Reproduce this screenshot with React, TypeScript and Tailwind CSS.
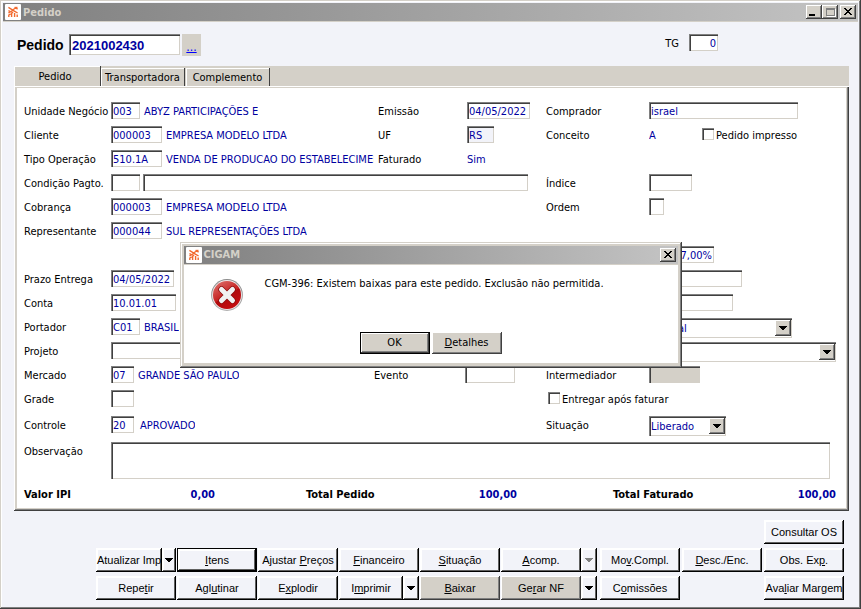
import type { ReactNode } from "react";

const sunken =
  "shadow-[inset_1px_1px_#808080,inset_2px_2px_#404040,inset_-1px_-1px_#d4d0c8]";
const raised =
  "shadow-[inset_-1px_-1px_#404040,inset_1px_1px_#ffffff,inset_-2px_-2px_#808080]";
const frame =
  "shadow-[inset_-1px_-1px_#404040,inset_1px_1px_#d4d0c8,inset_-2px_-2px_#808080,inset_2px_2px_#ffffff]";

function AppIcon() {
  return (
    <svg viewBox="0 0 16 16" className="size-4 shrink-0" aria-hidden="true">
      <rect width="16" height="16" rx="1" fill="#fff" />
      <g fill="none" stroke="#f26a2e" strokeWidth="1.4">
        <path d="M3.4 3.4 L7.4 5.8 M3.4 6.6 L5 7.4 M7.4 6 L12.4 3 M9.6 3.2 L12.6 5.2 M3.4 9 L8 6.4 L12.6 9" />
        <path d="M3.8 13 L3.8 11 L5.6 9.8 M6.6 13 L6.6 9 L8.2 8.4 M9.6 13 L9.6 9 M12.2 13 L12.2 10.4" />
      </g>
    </svg>
  );
}

function TitleButton({ label, children }: { label: string; children: ReactNode }) {
  return (
    <button
      type="button"
      aria-label={label}
      className={`flex h-3.5 w-4 items-center justify-center bg-[#d4d0c8] ${raised}`}
    >
      {children}
    </button>
  );
}

function CloseGlyph() {
  return (
    <svg viewBox="0 0 16 14" className="h-3.5 w-4" shapeRendering="crispEdges" aria-hidden="true">
      <path
        d="M4 3h2v1h1v1h2v-1h1v-1h2v1h-1v1h-1v1h-1v1h1v1h1v1h1v1h-2v-1h-1v-1h-2v1h-1v1h-2v-1h1v-1h1v-1h1v-1h-1v-1h-1v-1h-1z"
        fill="#000"
      />
    </svg>
  );
}

function TitleBar({ title, children }: { title: string; children: ReactNode }) {
  return (
    <header className="flex h-[19px] items-center gap-0.5 border-b border-[#d4d0c8] bg-linear-to-r from-[#808080] to-[#c4c4c4] px-0.5">
      <AppIcon />
      <h2 className="flex-1 pt-0.5 font-bold text-[#d4d0c8]">{title}</h2>
      {children}
    </header>
  );
}

function Row({ children, className = "h-6" }: { children: ReactNode; className?: string }) {
  return <div className={`grid grid-cols-[354fr_168fr_290fr] ${className}`}>{children}</div>;
}

function Cell({ children, className = "" }: { children?: ReactNode; className?: string }) {
  return <div className={`flex min-w-0 items-start ${className}`}>{children}</div>;
}

function Label({
  htmlFor,
  width = "w-[87px]",
  children,
}: {
  htmlFor?: string;
  width?: string;
  children: ReactNode;
}) {
  const classes = `${width} shrink-0 whitespace-nowrap leading-5`;
  return htmlFor ? (
    <label htmlFor={htmlFor} className={classes}>
      {children}
    </label>
  ) : (
    <span className={classes}>{children}</span>
  );
}

function Field({
  id,
  value = "",
  width,
  label,
  tone = "bg-white",
}: {
  id: string;
  value?: string;
  width: string;
  label?: string;
  tone?: string;
}) {
  return (
    <input
      id={id}
      aria-label={label}
      defaultValue={value}
      className={`h-[17px] ${width} ${tone} px-0.5 pt-0.5 text-[#0000a0] outline-none ${sunken}`}
    />
  );
}

function Value({ children, className = "pl-1" }: { children: ReactNode; className?: string }) {
  return (
    <span className={`min-w-0 overflow-hidden whitespace-nowrap leading-5 text-[#0000a0] ${className}`}>
      {children}
    </span>
  );
}

function Check({ label }: { label: string }) {
  return (
    <label className="flex items-start gap-0.5 whitespace-nowrap leading-5">
      <input type="checkbox" className={`mt-0.5 size-3 appearance-none bg-white ${sunken}`} />
      {label}
    </label>
  );
}

function Arrow({ className = "text-black" }: { className?: string }) {
  return (
    <svg viewBox="0 0 8 4" className={`h-1 w-2 ${className}`} shapeRendering="crispEdges" aria-hidden="true">
      <path d="M0 0h8v1h-1v1h-1v1h-1v1h-2v-1h-1v-1h-1v-1h-1z" fill="currentColor" />
    </svg>
  );
}

function Combo({
  id,
  value,
  width,
  label,
}: {
  id: string;
  value: string;
  width: string;
  label?: string;
}) {
  return (
    <div className={`relative h-5 ${width}`}>
      <select
        id={id}
        aria-label={label}
        className={`size-full appearance-none bg-white pt-0.5 pl-0.5 text-[#0000a0] outline-none ${sunken}`}
      >
        <option>{value}</option>
      </select>
      <span
        className={`pointer-events-none absolute top-0.5 right-px flex size-4 items-center justify-center bg-[#d4d0c8] ${raised}`}
      >
        <Arrow />
      </span>
    </div>
  );
}

function Action({
  children,
  width = "w-20",
  kind = "normal",
  label,
}: {
  children: ReactNode;
  width?: string;
  kind?: "normal" | "muted" | "focus";
  label?: string;
}) {
  const looks = {
    normal:
      "bg-[#f2f3f9] shadow-[inset_-1px_-1px_#000000,inset_1px_1px_#ffffff,inset_-2px_-2px_#606060,inset_2px_2px_#ffffff]",
    muted:
      "bg-[#d4d0c8] shadow-[inset_-1px_-1px_#404040,inset_1px_1px_#ffffff,inset_-2px_-2px_#808080]",
    focus:
      "border border-black bg-[#f2f3f9] shadow-[inset_-1px_-1px_#000000,inset_1px_1px_#ffffff,inset_-2px_-2px_#606060,inset_2px_2px_#ffffff]",
  };
  return (
    <button
      type="button"
      aria-label={label}
      className={`flex h-6 shrink-0 items-center justify-center whitespace-nowrap font-['Liberation_Sans',Arial,sans-serif] ${width} ${looks[kind]}`}
    >
      <span>{children}</span>
    </button>
  );
}

function ArrowAction({ label, width, tone }: { label: string; width: string; tone?: string }) {
  return (
    <Action label={label} width={width}>
      <Arrow className={tone} />
    </Action>
  );
}

function Total({ label, value, className = "" }: { label: string; value: string; className?: string }) {
  return (
    <div className={`flex justify-between font-bold ${className}`}>
      <dt>{label}</dt>
      <dd className="text-[#0000a0]">{value}</dd>
    </div>
  );
}

function ErrorIcon() {
  return (
    <svg viewBox="0 0 32 32" className="size-8 shrink-0" aria-hidden="true">
      <defs>
        <linearGradient id="rim" x1="0" y1="0" x2="0" y2="1">
          <stop offset="0" stopColor="#8a8a8a" />
          <stop offset="1" stopColor="#b0b0b0" />
        </linearGradient>
        <linearGradient id="ball" x1="0.2" y1="0" x2="0.8" y2="1">
          <stop offset="0" stopColor="#dc6a66" />
          <stop offset="0.5" stopColor="#c4201f" />
          <stop offset="0.52" stopColor="#b00a0c" />
          <stop offset="1" stopColor="#c80d10" />
        </linearGradient>
      </defs>
      <circle cx="16" cy="16" r="15.9" fill="url(#rim)" />
      <circle cx="16" cy="16" r="14.9" fill="#f1e9e9" />
      <circle cx="16" cy="16" r="14" fill="url(#ball)" />
      <path d="M10.5 10.5 L21.5 21.5 M21.5 10.5 L10.5 21.5" stroke="#8d0a0a" strokeWidth="6.4" strokeLinecap="round" />
      <path d="M10.5 10.5 L21.5 21.5 M21.5 10.5 L10.5 21.5" stroke="#f1f1f1" strokeWidth="5" strokeLinecap="round" />
    </svg>
  );
}

function Dialog() {
  return (
    <div className="fixed inset-0 flex items-center justify-center">
      <div role="dialog" aria-label="CIGAM" className={`w-[502px] bg-[#d4d0c8] p-1 pb-[5px] ${frame}`}>
        <TitleBar title="CIGAM">
          <TitleButton label="Fechar">
            <CloseGlyph />
          </TitleButton>
        </TitleBar>
        <div className="bg-white px-[27px] pt-3.5 pb-[9px]">
          <div className="flex gap-[22px]">
            <ErrorIcon />
            <p className="whitespace-nowrap leading-2.5">
              CGM-396: Existem baixas para este pedido. Exclusão não permitida.
            </p>
          </div>
          <div className="mt-[21px] flex justify-center gap-0.5">
            <button
              type="button"
              className={`h-[22px] w-[70px] border border-black bg-[#d4d0c8] pt-0.5 ${raised}`}
            >
              OK
            </button>
            <button type="button" className={`h-[22px] w-[70px] bg-[#d4d0c8] pt-0.5 ${raised}`}>
              <u>D</u>etalhes
            </button>
          </div>
        </div>
      </div>
    </div>
  );
}

function Tabs() {
  const tab = "border-r border-[#404040] pt-0.5 shadow-[inset_1px_1px_#ffffff]";
  return (
    <div role="tablist" className="flex h-5 items-end bg-[#d4d0c8]">
      <button
        type="button"
        role="tab"
        aria-selected="true"
        className={`h-full w-[87px] pr-1 ${tab}`}
      >
        Pedido
      </button>
      <button type="button" role="tab" aria-selected="false" className={`h-[18px] w-[84px] ${tab}`}>
        Transportadora
      </button>
      <button type="button" role="tab" aria-selected="false" className={`ml-px h-[18px] w-[84px] ${tab}`}>
        Complemento
      </button>
    </div>
  );
}

function OrderForm() {
  return (
    <div className="bg-white pt-3.5 pr-2.5 pb-[3px] pl-[7px]">
      <Row>
        <Cell>
          <Label htmlFor="unidade">Unidade Negócio</Label>
          <Field id="unidade" value="003" width="w-[29px]" />
          <Value>ABYZ PARTICIPAÇÕES E</Value>
        </Cell>
        <Cell>
          <Label htmlFor="emissao" width="w-[89px]">Emissão</Label>
          <Field id="emissao" value="04/05/2022" width="w-[63px]" />
        </Cell>
        <Cell>
          <Label htmlFor="comprador" width="w-[103px]">Comprador</Label>
          <Field id="comprador" value="israel" width="w-[149px]" />
        </Cell>
      </Row>
      <Row>
        <Cell>
          <Label htmlFor="cliente">Cliente</Label>
          <Field id="cliente" value="000003" width="w-[51px]" />
          <Value>EMPRESA MODELO LTDA</Value>
        </Cell>
        <Cell>
          <Label htmlFor="uf" width="w-[89px]">UF</Label>
          <Field id="uf" value="RS" width="w-[27px]" tone="bg-[#f2f3f9]" />
        </Cell>
        <Cell>
          <Label width="w-[103px]">Conceito</Label>
          <Value className="w-[53px]">A</Value>
          <Check label="Pedido impresso" />
        </Cell>
      </Row>
      <Row>
        <Cell className="pr-1">
          <Label htmlFor="operacao">Tipo Operação</Label>
          <Field id="operacao" value="510.1A" width="w-[51px] shrink-0" />
          <Value>VENDA DE PRODUCAO DO ESTABELECIMEN</Value>
        </Cell>
        <Cell>
          <Label width="w-[89px]">Faturado</Label>
          <Value className="">Sim</Value>
        </Cell>
      </Row>
      <Row>
        <Cell className="col-span-2 gap-[3px] pr-[18px]">
          <Label htmlFor="condicao" width="w-[84px]">Condição Pagto.</Label>
          <Field id="condicao" width="w-[29px] shrink-0" />
          <Field id="condicao-nome" label="Descrição da condição" width="min-w-0 flex-1" />
        </Cell>
        <Cell>
          <Label htmlFor="indice" width="w-[103px]">Índice</Label>
          <Field id="indice" width="w-[43px]" />
        </Cell>
      </Row>
      <Row>
        <Cell>
          <Label htmlFor="cobranca">Cobrança</Label>
          <Field id="cobranca" value="000003" width="w-[51px]" />
          <Value>EMPRESA MODELO LTDA</Value>
        </Cell>
        <Cell />
        <Cell>
          <Label htmlFor="ordem" width="w-[103px]">Ordem</Label>
          <Field id="ordem" width="w-[15px]" />
        </Cell>
      </Row>
      <Row>
        <Cell>
          <Label htmlFor="representante">Representante</Label>
          <Field id="representante" value="000044" width="w-[51px]" />
          <Value>SUL REPRESENTAÇÕES LTDA</Value>
        </Cell>
      </Row>
      <Row>
        <Cell className="col-start-3 pl-[103px]">
          <Field id="percentual" label="Percentual" value="7,00%" width="w-[65px] text-right" />
        </Cell>
      </Row>
      <Row>
        <Cell>
          <Label htmlFor="prazo">Prazo Entrega</Label>
          <Field id="prazo" value="04/05/2022" width="w-[63px]" />
        </Cell>
        <Cell className="col-start-3 pl-[103px]">
          <Field id="referencia" label="Referência" width="w-[93px]" />
        </Cell>
      </Row>
      <Row>
        <Cell>
          <Label htmlFor="conta">Conta</Label>
          <Field id="conta" value="10.01.01" width="w-[65px]" />
        </Cell>
        <Cell className="col-start-3 pl-[103px]">
          <Field id="contrato" label="Contrato" width="w-[84px]" />
        </Cell>
      </Row>
      <Row>
        <Cell>
          <Label htmlFor="portador">Portador</Label>
          <Field id="portador" value="C01" width="w-[29px]" />
          <Value>BRASIL</Value>
        </Cell>
        <Cell className="col-start-3 pl-[103px]">
          <Combo id="tipo" label="Tipo" value="Normal" width="w-[143px]" />
        </Cell>
      </Row>
      <Row>
        <Cell>
          <Label htmlFor="projeto">Projeto</Label>
          <Field id="projeto" width="w-[200px]" />
        </Cell>
        <Cell className="col-start-3 pl-[103px]">
          <Combo id="modalidade" label="Modalidade" value="" width="w-full" />
        </Cell>
      </Row>
      <div className="grid h-6 grid-cols-[350fr_172fr_290fr]">
        <Cell>
          <Label htmlFor="mercado">Mercado</Label>
          <Field id="mercado" value="07" width="w-[23px]" />
          <Value>GRANDE SÃO PAULO</Value>
        </Cell>
        <Cell>
          <Label htmlFor="evento" width="w-[91px]">Evento</Label>
          <Field id="evento" width="w-[50px]" />
        </Cell>
        <Cell>
          <Label htmlFor="intermediador" width="w-[103px]">Intermediador</Label>
          <Field id="intermediador" width="w-[51px]" tone="bg-[#d4d0c8]" />
        </Cell>
      </div>
      <Row className="h-[26px]">
        <Cell>
          <Label htmlFor="grade">Grade</Label>
          <Field id="grade" width="w-[23px]" />
        </Cell>
        <Cell className="col-start-3 pl-0.5">
          <Check label="Entregar após faturar" />
        </Cell>
      </Row>
      <Row className="h-[26px]">
        <Cell>
          <Label htmlFor="controle">Controle</Label>
          <Field id="controle" value="20" width="w-[23px]" />
          <Value className="pl-1.5">APROVADO</Value>
        </Cell>
        <Cell className="col-start-3">
          <Label htmlFor="situacao" width="w-[103px]">Situação</Label>
          <Combo id="situacao" value="Liberado" width="w-[77px]" />
        </Cell>
      </Row>
      <div className="flex items-start pr-1.5">
        <Label htmlFor="observacao">Observação</Label>
        <textarea
          id="observacao"
          className={`h-[37px] flex-1 resize-none bg-white p-1 text-[#0000a0] outline-none ${sunken}`}
        />
      </div>
      <dl className="mt-1.5 grid grid-cols-[282fr_307fr_223fr] leading-5">
        <Total label="Valor IPI" value="0,00" className="pr-[91px]" />
        <Total label="Total Pedido" value="100,00" className="pr-24" />
        <Total label="Total Faturado" value="100,00" />
      </dl>
    </div>
  );
}

function Actions() {
  return (
    <footer className="mt-auto flex flex-col items-end gap-1 pt-2 pr-3.5 pb-1.5">
      <Action>Consultar OS</Action>
      <div className="flex gap-[3px]">
        <div className="flex gap-px">
          <div className="flex">
            <Action width="w-[66px]">Atualizar Imp</Action>
            <ArrowAction label="Opções de Atualizar Imp" width="w-3.5" />
          </div>
          <Action kind="focus"><u>I</u>tens</Action>
          <Action>Ajustar <u>P</u>reços</Action>
          <Action><u>F</u>inanceiro</Action>
          <Action><u>S</u>ituação</Action>
          <div className="flex">
            <Action><u>A</u>comp.</Action>
            <ArrowAction label="Opções de Acomp." width="w-4" tone="text-[#808080]" />
          </div>
        </div>
        <div className="grid grid-cols-3 gap-0.5">
          <Action>Mo<u>v</u>.Compl.</Action>
          <Action><u>D</u>esc./Enc.</Action>
          <Action>Obs. Ex<u>p</u>.</Action>
        </div>
      </div>
      <div className="flex gap-[3px]">
        <div className="flex gap-px">
          <Action>Repe<u>t</u>ir</Action>
          <Action>Agl<u>u</u>tinar</Action>
          <Action>E<u>x</u>plodir</Action>
          <div className="flex">
            <Action width="w-16">I<u>m</u>primir</Action>
            <ArrowAction label="Opções de Imprimir" width="w-4" />
          </div>
          <Action kind="muted"><u>B</u>aixar</Action>
          <div className="flex">
            <Action kind="muted">Ge<u>r</u>ar NF</Action>
            <ArrowAction label="Opções de Gerar NF" width="w-4" />
          </div>
        </div>
        <div className="grid grid-cols-3 gap-0.5">
          <Action>C<u>o</u>missões</Action>
          <span />
          <Action>Ava<u>l</u>iar Margem</Action>
        </div>
      </div>
    </footer>
  );
}

export default function App() {
  return (
    <main
      className={`flex min-h-screen flex-col bg-[#f2f3f9] p-[3px] font-['DejaVu_Sans_Condensed',Tahoma,sans-serif] text-[11px] text-black ${frame}`}
    >
      <TitleBar title="Pedido">
        <div className="flex">
          <TitleButton label="Minimizar">
            <span className="mt-1.5 mr-1 h-0.5 w-1.5 bg-black" />
          </TitleButton>
          <TitleButton label="Maximizar">
            <span className="h-2 w-[9px] border border-t-2 border-[#808080] shadow-[1px_1px_#ffffff]" />
          </TitleButton>
        </div>
        <TitleButton label="Fechar">
          <CloseGlyph />
        </TitleButton>
      </TitleBar>

      <div className="flex h-11 items-start pt-3 pr-[140px] pl-3.5">
        <label
          htmlFor="pedido"
          className="w-[52px] font-['Liberation_Sans',Arial,sans-serif] text-sm leading-[22px] font-bold"
        >
          Pedido
        </label>
        <input
          id="pedido"
          defaultValue="2021002430"
          className={`h-[21px] w-[111px] bg-white px-[3px] pt-0.5 font-['Liberation_Sans',Arial,sans-serif] text-[13px] font-bold text-[#0000a0] outline-none ${sunken}`}
        />
        <a
          href="#buscar"
          aria-label="Buscar pedido"
          className="ml-0.5 flex h-[22px] w-[19px] items-center justify-center bg-[#d4d0c8] pt-1 text-xs text-[#0000ff] underline"
        >
          ...
        </a>
        <label htmlFor="tg" className="mr-2.5 ml-auto leading-5">
          TG
        </label>
        <Field id="tg" value="0" width="w-[29px] text-right" />
      </div>

      <section className="mr-[9px] ml-[11px] flex flex-col">
        <Tabs />
        <div className="border-t border-white bg-[#d4d0c8] px-[3px] pt-px pb-[3px] shadow-[inset_-1px_-1px_#404040,inset_1px_0_#ffffff,inset_-2px_-2px_#808080]">
          <OrderForm />
        </div>
      </section>

      <Actions />
      <Dialog />
    </main>
  );
}
